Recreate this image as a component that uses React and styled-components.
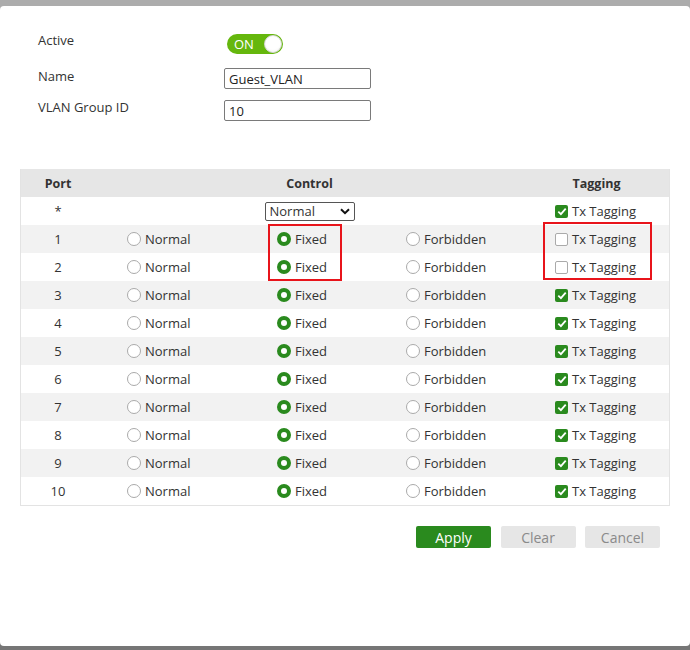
import React from "react";
import styled, { createGlobalStyle } from "styled-components";

const Global = createGlobalStyle`
  html, body { margin: 0; padding: 0; }
  body {
    width: 690px;
    height: 650px;
    overflow: hidden;
    background: linear-gradient(#acacac 0 50%, #767676 50% 100%);
    font-family: "Open Sans", "DejaVu Sans", sans-serif;
    color: #333;
  }
`;

const Panel = styled.div`
  margin-top: 6px;
  width: 690px;
  height: 640px;
  box-sizing: border-box;
  background: #fff;
  border-radius: 4px;
  padding: 28px 0 0 20px;
`;

const Form = styled.div`
  display: grid;
  grid-template-columns: 186px 150px;
  grid-auto-rows: auto;
  row-gap: 11px;
  padding-left: 18px;
`;

const Label = styled.div`
  font-size: 13px;
  line-height: 16px;
  margin-top: ${(p) => p.$offset || 0}px;
  color: #333;
`;

const Toggle = styled.div`
  width: 56px;
  height: 20px;
  border-radius: 10px;
  background: #65b70d;
  display: flex;
  align-items: center;
  justify-content: space-between;
  box-sizing: border-box;
  padding: 0 1px 0 7px;
  margin: 0 0 3px 3px;
`;

const ToggleText = styled.span`
  color: #fff;
  font-size: 13px;
  line-height: 20px;
`;

const Knob = styled.span`
  width: 18px;
  height: 18px;
  border-radius: 50%;
  background: radial-gradient(circle at 50% 40%, #ffffff 55%, #ececec 100%);
  box-sizing: border-box;
  border: 1px solid #d8d8d8;
`;

const TextInput = styled.input`
  width: 147px;
  height: 21px;
  box-sizing: border-box;
  border: 1px solid #7a7a7a;
  border-radius: 2px;
  padding: 0 4px;
  font-family: "Open Sans", sans-serif;
  font-size: 13px;
  color: #222;
  outline: none;
`;

const TableWrap = styled.div`
  position: relative;
  margin-top: 48px;
  width: 650px;
  box-sizing: border-box;
  border: 1px solid #e3e3e3;
  border-top: none;
`;

const Row = styled.div`
  display: grid;
  grid-template-columns: 74px 182px 129px 149px 1fr;
  height: 28px;
  background: ${(p) => p.$bg};
  align-items: center;
`;

const HeadCell = styled.div`
  font-weight: 700;
  font-size: 12.5px;
  color: #333;
  text-align: center;
  grid-column: ${(p) => p.$span || "auto"};
  padding-right: ${(p) => p.$pr || 0}px;
`;

const PortCell = styled.div`
  text-align: center;
  font-size: 13px;
  color: #333;
`;

const Cell = styled.div`
  display: flex;
  align-items: center;
  gap: 4px;
  padding-left: ${(p) => p.$pl || 0}px;
  font-size: 13px;
  color: #333;
  grid-column: ${(p) => p.$span || "auto"};
  justify-content: ${(p) => (p.$center ? "center" : "flex-start")};
  padding-right: ${(p) => p.$pr || 0}px;
`;

const Radio = styled.span`
  width: 14px;
  height: 14px;
  border-radius: 50%;
  box-sizing: border-box;
  background: #fff;
  border: ${(p) => (p.$on ? "4.5px solid #2a8a1e" : "1.5px solid #aaa")};
  flex: none;
`;

const Box = styled.span`
  width: 13px;
  height: 13px;
  box-sizing: border-box;
  border-radius: 2px;
  flex: none;
  display: flex;
  align-items: center;
  justify-content: center;
  background: ${(p) => (p.$on ? "#2a8a1e" : "#fff")};
  border: ${(p) => (p.$on ? "none" : "1.5px solid #aaa")};
`;

const SelectWrap = styled.div`
  position: relative;
  width: 90px;
  height: 19px;
`;

const Select = styled.select`
  appearance: none;
  width: 90px;
  height: 19px;
  box-sizing: border-box;
  border: 1px solid #555;
  border-radius: 2px;
  background: #fff;
  font-family: "Open Sans", sans-serif;
  font-size: 13px;
  color: #333;
  padding: 0 0 0 4px;
  line-height: 17px;
  outline: none;
`;

const Chevron = styled.svg`
  position: absolute;
  right: 5px;
  top: 6px;
  pointer-events: none;
`;

const Highlight = styled.div`
  position: absolute;
  left: ${(p) => p.$l}px;
  top: ${(p) => p.$t}px;
  width: ${(p) => p.$w}px;
  height: ${(p) => p.$h}px;
  border: 2px solid #e8141b;
  box-sizing: border-box;
  pointer-events: none;
`;

const Buttons = styled.div`
  display: flex;
  justify-content: flex-end;
  gap: 9.5px;
  width: 640px;
  margin-top: 20px;
`;

const Button = styled.button`
  width: 75px;
  height: 22px;
  border: none;
  border-radius: 2px;
  font-family: "Open Sans", sans-serif;
  font-size: 14px;
  padding: 0;
  background: ${(p) => (p.$primary ? "#2a8a1e" : "#e6e6e6")};
  color: ${(p) => (p.$primary ? "#fff" : "#8a8a8a")};
`;

const Check = () => (
  <svg width="10" height="9" viewBox="0 0 10 9">
    <path d="M1.3 4.6 L3.9 7.1 L8.7 1.6" fill="none" stroke="#fff" strokeWidth="1.8" />
  </svg>
);

const ports = [1, 2, 3, 4, 5, 6, 7, 8, 9, 10];

export default function App() {
  return (
    <>
      <Global />
      <Panel>
        <Form>
          <Label $offset={-2}>Active</Label>
          <div>
            <Toggle>
              <ToggleText>ON</ToggleText>
              <Knob />
            </Toggle>
          </div>
          <Label $offset={0}>Name</Label>
          <TextInput defaultValue="Guest_VLAN" />
          <Label $offset={-1}>VLAN Group ID</Label>
          <TextInput defaultValue="10" />
        </Form>

        <TableWrap>
          <Row $bg="#e6e6e6">
            <HeadCell>Port</HeadCell>
            <HeadCell $span="2 / 5" $pr={31}>Control</HeadCell>
            <HeadCell $pr={31}>Tagging</HeadCell>
          </Row>
          <Row $bg="#fff">
            <PortCell>*</PortCell>
            <Cell $span="2 / 5" $center $pr={31}>
              <SelectWrap>
                <Select defaultValue="Normal">
                  <option>Normal</option>
                  <option>Fixed</option>
                  <option>Forbidden</option>
                </Select>
                <Chevron width="10" height="7" viewBox="0 0 10 7">
                  <path d="M1 1.2 L5 5.2 L9 1.2" fill="none" stroke="#111" strokeWidth="2" />
                </Chevron>
              </SelectWrap>
            </Cell>
            <Cell>
              <Box $on><Check /></Box>Tx Tagging
            </Cell>
          </Row>
          {ports.map((p) => {
            const tagged = p > 2;
            return (
              <Row key={p} $bg={p % 2 === 1 ? "#f2f2f2" : "#fff"}>
                <PortCell>{p}</PortCell>
                <Cell $pl={32}>
                  <Radio />Normal
                </Cell>
                <Cell>
                  <Radio $on />Fixed
                </Cell>
                <Cell>
                  <Radio />Forbidden
                </Cell>
                <Cell>
                  <Box $on={tagged}>{tagged && <Check />}</Box>Tx Tagging
                </Cell>
              </Row>
            );
          })}
          <Highlight $l={247} $t={55} $w={74} $h={57} />
          <Highlight $l={522} $t={53} $w={109} $h={58} />
        </TableWrap>

        <Buttons>
          <Button $primary>Apply</Button>
          <Button>Clear</Button>
          <Button>Cancel</Button>
        </Buttons>
      </Panel>
    </>
  );
}
